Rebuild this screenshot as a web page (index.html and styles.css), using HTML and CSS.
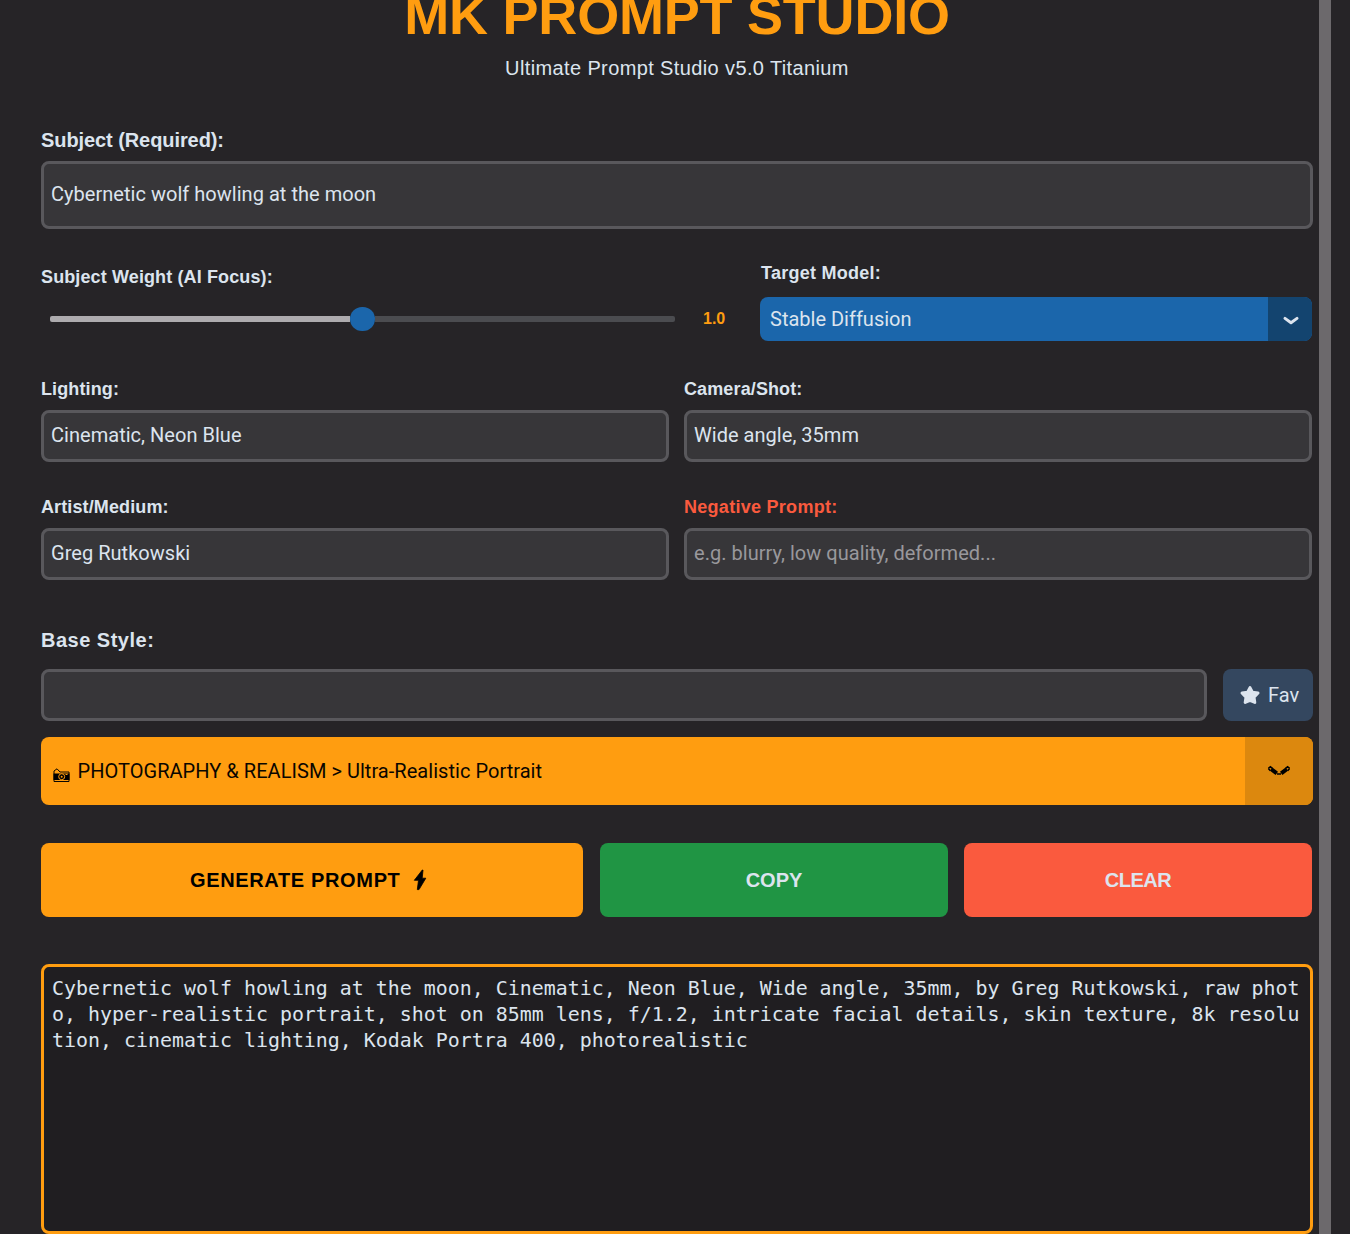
FILE: index.html
```html
<!DOCTYPE html>
<html lang="en">
<head>
<meta charset="utf-8">
<title>MK Prompt Studio</title>
<link rel="stylesheet" href="styles.css">
</head>
<body>
<main class="studio">
  <h1 class="title">MK PROMPT STUDIO</h1>
  <p class="subtitle">Ultimate Prompt Studio v5.0 Titanium</p>

  <section class="subject">
    <h2 class="label label-large">Subject (Required):</h2>
    <div class="field field-tall">Cybernetic wolf howling at the moon</div>
  </section>

  <section class="tuning">
    <div class="weight">
      <h3 class="label">Subject Weight (AI Focus):</h3>
      <div class="slider-row">
        <div class="slider"><div class="slider-fill"></div><div class="slider-knob"></div><div class="slider-rest"></div></div>
        <span class="slider-value">1.0</span>
      </div>
    </div>
    <div class="model">
      <h3 class="label label-model">Target Model:</h3>
      <div class="select select-blue">
        <span class="select-text">Stable Diffusion</span>
        <span class="select-arrow"><svg width="18" height="12" viewBox="0 0 18 12"><path d="M3 4.4 9 8.7l6-4.3" fill="none" stroke="#dce4ee" stroke-width="3" stroke-linecap="round" stroke-linejoin="round"/></svg></span>
      </div>
    </div>
  </section>

  <section class="pairs">
    <div><h3 class="label">Lighting:</h3><div class="field">Cinematic, Neon Blue</div></div>
    <div><h3 class="label">Camera/Shot:</h3><div class="field">Wide angle, 35mm</div></div>
    <div><h3 class="label">Artist/Medium:</h3><div class="field">Greg Rutkowski</div></div>
    <div><h3 class="label label-negative">Negative Prompt:</h3><div class="field placeholder">e.g. blurry, low quality, deformed...</div></div>
  </section>

  <section class="style">
    <h2 class="label label-large label-style">Base Style:</h2>
    <div class="style-row">
      <div class="field style-search"></div>
      <div class="fav">
        <svg width="22" height="20" viewBox="0 0 22 20"><path d="M11 2.6l2.4 4.6 5.6.8-4 4.2.8 5.3L11 15.4l-4.8 2.1.8-5.3L3 8l5.6-.8z" fill="#dce4ee" stroke="#dce4ee" stroke-width="3" stroke-linejoin="round"/></svg>
        <span>Fav</span>
      </div>
    </div>
    <div class="select select-orange">
      <span class="select-text">
        <svg class="camera" width="17" height="15" viewBox="0 0 17 15"><path d="M1 5V3L4 .8 7 4h9v9.5H1z" fill="none" stroke="#0a0600" stroke-width="1"/><path d="M.5 5.5h16V12H.5z"/><circle cx="8.7" cy="8.7" r="3" fill="none" stroke="#ff9d10" stroke-width="1"/><circle cx="8.7" cy="8.7" r="1" fill="#ff9d10"/><path d="M12.5 6.5h2" stroke="#ff9d10"/></svg>
        <span>PHOTOGRAPHY &amp; REALISM &gt; Ultra-Realistic Portrait</span>
      </span>
      <span class="select-arrow"><svg width="26" height="12" viewBox="0 0 26 12"><path d="M5.2 4.2l5.6 4.2M20.8 4.2l-5.6 4.2" fill="none" stroke="#000" stroke-width="4"/><path d="M2.4 3.4l2-1.6 2 1.6M23.6 3.4l-2-1.6-2 1.6M2.4 3.4l2 2.4M23.6 3.4l-2 2.4M11 9h4" fill="none" stroke="#000" stroke-width="1.6"/></svg></span>
    </div>
  </section>

  <section class="actions">
    <div class="button generate"><span>GENERATE PROMPT</span><svg width="14" height="22" viewBox="0 0 14 22"><path d="M9.3 1 1.3 11.3H5.5L4.3 20.6H6L12.8 9.2H9.2L10 1z" stroke="#000" stroke-width=".8"/></svg></div>
    <div class="button copy">COPY</div>
    <div class="button clear">CLEAR</div>
  </section>

  <section class="output">Cybernetic wolf howling at the moon, Cinematic, Neon Blue, Wide angle, 35mm, by Greg Rutkowski, raw photo, hyper-realistic portrait, shot on 85mm lens, f/1.2, intricate facial details, skin texture, 8k resolution, cinematic lighting, Kodak Portra 400, photorealistic</section>
</main>
<div class="scrollbar"></div>
</body>
</html>
```

FILE: styles.css
```css
* { box-sizing: border-box; }

body {
  margin: 0;
  display: flex;
  height: 1234px;
  overflow: hidden;
  background: #262427;
  color: #dce4ee;
  font-family: "Liberation Sans", Arial, sans-serif;
}

h1, h2, h3, p { margin: 0; }
svg { display: block; flex: none; }

.studio { width: 1319px; padding: 0 6px 0 41px; }

.scrollbar { width: 12px; background: #6c696c; }

.title {
  height: 54px;
  margin-top: -12px;
  font-size: 54px;
  line-height: 54px;
  letter-spacing: -0.22px;
  text-align: center;
  color: #ff9d10;
}

.subtitle {
  height: 24px;
  margin-top: 14px;
  font-size: 20px;
  line-height: 24px;
  letter-spacing: 0.38px;
  text-align: center;
}

.subject { margin-top: 48px; }

.label { height: 22px; font-size: 18px; line-height: 22px; font-weight: bold; letter-spacing: 0.12px; }
.label-large { height: 24px; font-size: 20px; line-height: 24px; letter-spacing: -0.08px; }
.label-style { letter-spacing: 0.5px; }
.label-model { padding-left: 1px; letter-spacing: 0.25px; }
.label-negative { color: #fa5a3e; letter-spacing: 0.28px; }

.field {
  display: flex;
  align-items: center;
  height: 52px;
  padding: 0 7px 2px;
  border: 3px solid #59585c;
  border-radius: 8px;
  background: #373639;
  font-family: Roboto, sans-serif;
  font-size: 20px;
  letter-spacing: 0.03px;
}
.field-tall { height: 68px; margin-top: 9px; }
.placeholder { color: #99989c; }

.tuning { display: flex; height: 110px; margin-top: 33px; }
.weight { width: 719px; padding-top: 4px; }
.slider-row { display: flex; align-items: center; height: 26px; margin-top: 18px; padding-left: 9px; }
.slider { display: flex; align-items: center; width: 625px; }
.slider-fill { width: 300px; height: 6px; border-radius: 2px 0 0 2px; background: #adabae; }
.slider-knob { width: 24.5px; height: 24.5px; border-radius: 50%; background: #1b66ab; }
.slider-rest { flex: 1; height: 6px; border-radius: 0 2px 2px 0; background: #4b4c50; }
.slider-value { margin-left: 28px; font-size: 16px; font-weight: bold; color: #ff9d10; }

.model { width: 552px; }
.select { display: flex; overflow: hidden; border-radius: 8px; font-family: Roboto, sans-serif; font-size: 20px; }
.select-text { display: flex; flex: 1; align-items: center; padding-left: 10px; }
.select-arrow { display: flex; align-items: center; justify-content: center; }
.select-blue { height: 44px; margin-top: 13px; background: #1b66ab; }
.select-blue .select-arrow { width: 44px; padding: 2px 0 0 1px; background: #13446f; }

.pairs { display: grid; grid-template-columns: 628px 628px; gap: 34px 15px; margin-top: 6px; }
.pairs .field { margin-top: 10px; }

.style { margin-top: 48px; }
.style-row { display: flex; gap: 16px; margin-top: 17px; }
.style-search { width: 1166px; }
.fav {
  display: flex;
  align-items: center;
  gap: 7px;
  width: 90px;
  height: 52px;
  padding-left: 16px;
  border-radius: 8px;
  background: #34475f;
  font-family: Roboto, sans-serif;
  font-size: 20px;
}
.select-orange { height: 68px; margin-top: 16px; background: #ff9d10; color: #0a0600; letter-spacing: 0.04px; }
.select-orange .select-arrow { width: 68px; background: #dc880e; }
.camera { margin: 8px 7.5px 0 2px; }

.actions { display: flex; gap: 17px; margin-top: 38px; }
.button {
  display: flex;
  align-items: center;
  justify-content: center;
  height: 74px;
  border-radius: 8px;
  font-size: 20px;
  font-weight: bold;
}
.generate { width: 542px; gap: 12.5px; padding-right: 7px; letter-spacing: 0.65px; background: #ff9d10; color: #000; }
.copy { width: 348px; background: #209544; }
.clear { width: 348px; margin-left: -1px; letter-spacing: -0.5px; background: #fa5a3e; }

.output {
  height: 270px;
  margin-top: 47px;
  padding: 9px 8px 8px;
  border: 3px solid #ff9d10;
  border-radius: 8px;
  background: #201e21;
  font-family: "DejaVu Sans Mono", monospace;
  font-size: 19.93px;
  line-height: 26px;
  word-break: break-all;
}
```
